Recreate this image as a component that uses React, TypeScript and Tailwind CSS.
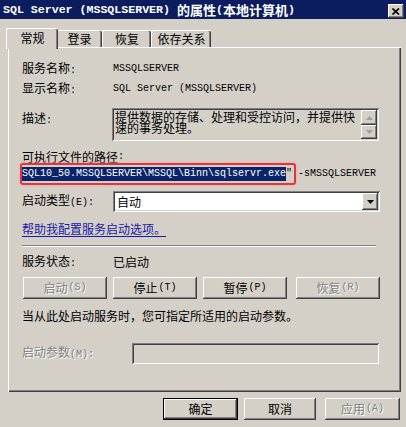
import type { ReactNode } from 'react'

const M = ({ children, className = '' }: { children: ReactNode; className?: string }) => (
  <span className={`font-['Liberation_Mono',monospace] text-[10px] ${className}`}>{children}</span>
)

const raised = 'shadow-[inset_-1px_-1px_#404040,inset_1px_1px_#ffffff,inset_-2px_-2px_#808080]'
const sunken = 'shadow-[inset_1px_1px_#808080,inset_-1px_-1px_#ffffff,inset_2px_2px_#404040,inset_-2px_-2px_#d4d0c8]'
const disabledText = 'text-[#808080] [text-shadow:1px_1px_#ffffff]'

function Btn({ label, hot, disabled, w, className = '', isDefault }: {
  label: string; hot?: string; disabled?: boolean; w: string; className?: string; isDefault?: boolean
}) {
  return (
    <div className={`${w} h-[22px] shrink-0 ${isDefault ? 'border border-black' : ''} ${className}`}>
      <div className={`w-full h-full flex items-center justify-center bg-[#d4d0c8] ${raised} ${disabled ? disabledText : ''}`}>
        <span>{label}</span>
        {hot && <M className="ml-[1px]">({hot})</M>}
      </div>
    </div>
  )
}

function Tab({ label, w, active }: { label: string; w: string; active?: boolean }) {
  return (
    <div
      className={`${w} flex items-center justify-center bg-[#d4d0c8] border-l border-t border-white rounded-tl-[2px] rounded-tr-[2px] shadow-[inset_-1px_0_#404040,inset_-2px_0_#808080] ${
        active ? 'h-[21px] -mx-[2px] -mb-[2px] relative z-10 pb-[3px]' : 'h-[17px]'
      }`}
    >
      {label}
    </div>
  )
}

export default function App() {
  return (
    <div className="w-[406px] h-[427px] overflow-hidden bg-[#d4d0c8] text-black font-['Noto_Sans_CJK_SC',sans-serif] text-[12px] leading-[14px]">
      {/* Title bar */}
      <div className="h-[19px] bg-[#0b1d5e] flex items-center pl-[3px] pr-[2px] text-white font-bold">
        <span className="font-['Liberation_Mono',monospace] text-[11.6px] whitespace-pre">SQL Server (MSSQLSERVER) </span>
        <span className="text-[13px]">的属性</span>
        <span className="font-['Liberation_Mono',monospace] text-[11.6px]">(</span>
        <span className="text-[13px]">本地计算机</span>
        <span className="font-['Liberation_Mono',monospace] text-[11.6px]">)</span>
        <div className={`ml-auto mt-[3px] w-[16px] h-[14px] bg-[#d4d0c8] flex items-center justify-center ${raised}`}>
          <svg width="8" height="7" viewBox="0 0 8 7">
            <path d="M0.5 0.5 L7 6.5 M7 0.5 L0.5 6.5" stroke="#000" strokeWidth="1.7" />
          </svg>
        </div>
      </div>

      {/* Tabs */}
      <div className="h-[28px] flex items-end pl-[8px]">
        <Tab label="常规" w="w-[52px]" active />
        <Tab label="登录" w="w-[46px]" />
        <Tab label="恢复" w="w-[49px]" />
        <Tab label="依存关系" w="w-[60px]" />
      </div>

      {/* Panel */}
      <div className="ml-[8px] w-[393px] h-[345px] border-t border-l border-white shadow-[inset_-1px_-1px_#404040,inset_-2px_-2px_#808080] pl-[13px] pt-[11px]">
        <div className="h-[20px] flex items-center">
          <div className="w-[91px]">服务名称<M>:</M></div>
          <M>MSSQLSERVER</M>
        </div>
        <div className="h-[20px] flex items-center">
          <div className="w-[91px]">显示名称<M>:</M></div>
          <M>SQL Server (MSSQLSERVER)</M>
        </div>

        <div className="mt-[9px] flex">
          <div className="w-[90px] pt-[3px]">描述<M>:</M></div>
          <div className={`w-[267px] h-[33px] flex p-[2px] ${sunken}`}>
            <div className="flex-1 pl-[1px] pt-[1px] leading-[11px]">
              提供数据的存储、处理和受控访问，并提供快速的事务处理。
            </div>
            <div className="w-[16px] flex flex-col">
              <div className={`h-[15px] flex items-center justify-center bg-[#d4d0c8] ${raised}`}>
                <svg width="7" height="4" viewBox="0 0 7 4"><path d="M3.5 0 L7 4 L0 4 Z" fill="#a0a0a0" /></svg>
              </div>
              <div className={`h-[14px] flex items-center justify-center bg-[#d4d0c8] ${raised}`}>
                <svg width="7" height="4" viewBox="0 0 7 4"><path d="M0 0 L7 0 L3.5 4 Z" fill="#a0a0a0" /></svg>
              </div>
            </div>
          </div>
        </div>

        <div className="mt-[9px] h-[13px] flex items-center">可执行文件的路径<M>:</M></div>
        <div className="h-[22px] flex items-center">
          <span className="-ml-[2px] h-[22px] inline-flex items-center border-2 border-[#e0353c] rounded-[3px] shadow-[0_0_3px_#f4a0a0] pr-[2px]">
            <span className="bg-[#0a246a] text-white h-[14px] flex items-center">
              <M>{'SQL10_50.MSSQLSERVER\\MSSQL\\Binn\\sqlservr.exe'}</M>
            </span>
            <M>"</M>
          </span>
          <M className="ml-[2px]">-sMSSQLSERVER</M>
        </div>

        <div className="mt-[6px] flex items-center">
          <div className="w-[91px]">启动类型<M>(E):</M></div>
          <div className={`w-[267px] h-[21px] bg-white flex items-center p-[2px] ${sunken}`}>
            <div className="flex-1 pl-[2px]">自动</div>
            <div className={`w-[16px] h-[17px] flex items-center justify-center bg-[#d4d0c8] ${raised}`}>
              <svg width="7" height="4" viewBox="0 0 7 4"><path d="M0 0 L7 0 L3.5 4 Z" fill="#000" /></svg>
            </div>
          </div>
        </div>

        <div className="mt-[10px] h-[14px] flex items-center">
          <span className="text-[#1a1aa6] underline underline-offset-2">帮助我配置服务启动选项。</span>
        </div>

        <div className="mt-[9px] w-[354px] h-[2px] border-t border-[#808080] border-b border-b-white" />

        <div className="mt-[8px] h-[14px] flex items-center">
          <div className="w-[91px]">服务状态<M>:</M></div>
          <span>已启动</span>
        </div>

        <div className="mt-[8px] flex">
          <Btn label="启动" hot="S" disabled w="w-[84px]" className="ml-[1px]" />
          <Btn label="停止" hot="T" w="w-[84px]" className="ml-[6px]" />
          <Btn label="暂停" hot="P" w="w-[84px]" className="ml-[6px]" />
          <Btn label="恢复" hot="R" disabled w="w-[84px]" className="ml-[9px]" />
        </div>

        <div className="mt-[10px] h-[14px] flex items-center">当从此处启动服务时，您可指定所适用的启动参数。</div>

        <div className="mt-[20px] flex items-center">
          <div className={`w-[110px] ${disabledText}`}>启动参数<M>(M):</M></div>
          <div className={`w-[247px] h-[21px] bg-[#d4d0c8] ${sunken}`} />
        </div>
      </div>

      {/* Dialog buttons */}
      <div className="mt-[6px] flex pl-[163px]">
        <Btn label="确定" w="w-[75px]" isDefault />
        <Btn label="取消" w="w-[72px]" className="ml-[6px]" />
        <Btn label="应用" hot="A" disabled w="w-[75px]" className="ml-[9px]" />
      </div>
    </div>
  )
}
